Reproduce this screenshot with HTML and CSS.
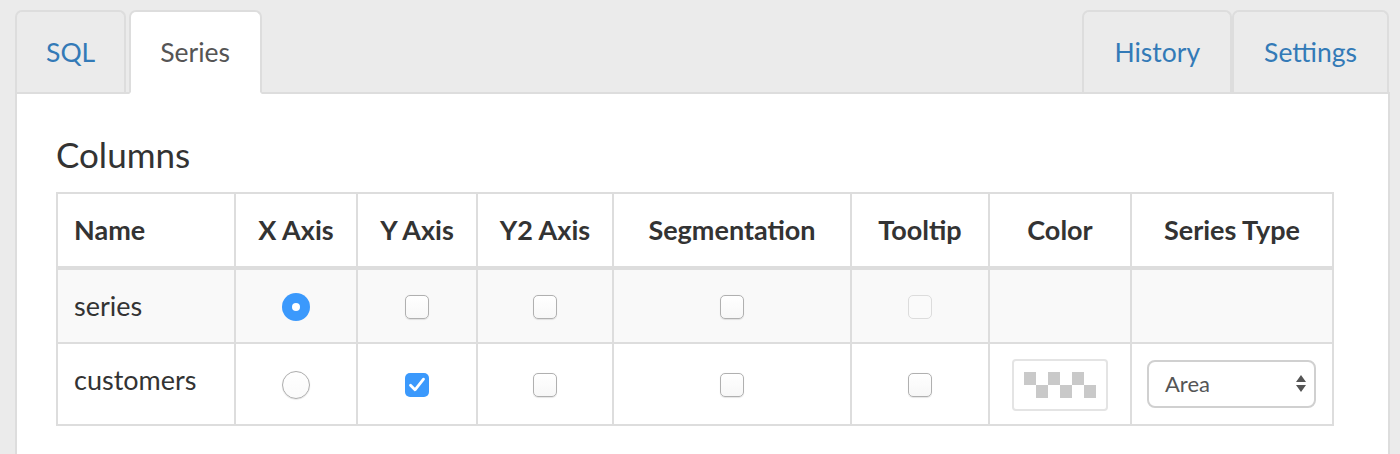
FILE: index.html
```html
<!DOCTYPE html>
<html>
<head>
<meta charset="utf-8">
<link rel="stylesheet" href="styles.css">
</head>
<body>
<div class="page">
  <ul class="tabs">
    <li class="tab"><a class="tab-link">SQL</a></li>
    <li class="tab active"><a class="tab-link">Series</a></li>
    <li class="spacer"></li>
    <li class="tab right"><a class="tab-link">History</a></li>
    <li class="tab right last"><a class="tab-link">Settings</a></li>
  </ul>
  <div class="panel">
    <h4 class="title">Columns</h4>
    <table class="cols">
      <colgroup>
        <col class="c-name"><col class="c-x"><col class="c-y"><col class="c-y2"><col class="c-seg"><col class="c-tip"><col class="c-color"><col class="c-type">
      </colgroup>
      <thead>
        <tr>
          <th class="left">Name</th>
          <th>X Axis</th>
          <th>Y Axis</th>
          <th>Y2 Axis</th>
          <th>Segmentation</th>
          <th>Tooltip</th>
          <th>Color</th>
          <th>Series Type</th>
        </tr>
      </thead>
      <tbody>
        <tr class="odd">
          <td>series</td>
          <td class="ctr"><span class="radio checked"></span></td>
          <td class="ctr"><span class="check"></span></td>
          <td class="ctr"><span class="check"></span></td>
          <td class="ctr"><span class="check"></span></td>
          <td class="ctr"><span class="check disabled"></span></td>
          <td></td>
          <td></td>
        </tr>
        <tr>
          <td>customers</td>
          <td class="ctr"><span class="radio"></span></td>
          <td class="ctr"><span class="check on"><svg viewBox="0 0 24 24" width="24" height="24"><path d="M5.5 12.2 L10 16.8 L18.5 6.2" fill="none" stroke="#fff" stroke-width="2.8" stroke-linecap="round" stroke-linejoin="round"/></svg></span></td>
          <td class="ctr"><span class="check"></span></td>
          <td class="ctr"><span class="check"></span></td>
          <td class="ctr"><span class="check"></span></td>
          <td class="ctr tight"><span class="swatch"><span class="checker"></span></span></td>
          <td class="sel-cell">
            <div class="select"><span class="sel-text">Area</span>
              <svg class="sel-arrows" viewBox="0 0 10 18" width="10" height="18"><path d="M5 0 L10 7 L0 7 Z M0 10 L10 10 L5 17 Z" fill="#555"/></svg>
            </div>
          </td>
        </tr>
      </tbody>
    </table>
  </div>
</div>
</body>
</html>
```
FILE: styles.css
```css
html, body {
  margin: 0;
  padding: 0;
  background: #ebebeb;
  font-family: Lato, "Liberation Sans", sans-serif;
  color: #333;
  overflow: hidden;
}
.page {
  margin-left: 15px;
  width: 1375px;
  padding-top: 10px;
}
.tabs {
  list-style: none;
  margin: 0;
  padding: 0;
  display: flex;
  align-items: flex-end;
  border-bottom: 2px solid #ddd;
}
.tab {
  margin-bottom: -2px;
  margin-right: 3px;
  border: 2px solid #ddd;
  border-bottom-color: transparent;
  border-radius: 7px 7px 0 0;
  background: #ebebeb;
  background-clip: padding-box;
}
.tab.right { margin-right: 0; }
.tab.last { margin-right: 1px; }
.tab.active {
  background: #fff;
  border-bottom-color: #fff;
  background-clip: border-box;
}
.tab-link {
  display: block;
  padding: 0 30px;
  height: 80px;
  line-height: 80px;
  font-size: 26.5px;
  color: #337ab7;
}
.tab:first-child .tab-link { padding: 0 29px; }
.tab.active .tab-link { color: #555; padding: 0 30px 0 29px; }
.spacer { flex: 1; }
.panel {
  background: #fff;
  border: 2px solid #ddd;
  border-top: 0;
  padding: 40px 0 0 39px;
  height: 400px;
}
.title {
  margin: 0 0 18px;
  font-size: 35px;
  line-height: 40px;
  font-weight: 400;
  color: #333;
}
.cols {
  border-collapse: collapse;
  table-layout: fixed;
  width: 1278px;
  font-size: 27px;
  line-height: 40px;
}
.c-name { width: 178px; }
.c-x { width: 122px; }
.c-y { width: 120px; }
.c-y2 { width: 136px; }
.c-seg { width: 238px; }
.c-tip { width: 138px; }
.c-color { width: 142px; }
.c-type { width: 202px; }
.cols th, .cols td {
  border: 2px solid #ddd;
  padding: 16px;
  vertical-align: top;
  text-align: left;
  white-space: nowrap;
}
.cols th {
  font-weight: 700;
  text-align: center;
  border-bottom-width: 4px;
}
.cols th.left { text-align: left; }
.cols tr.odd td { background: #f9f9f9; }
.cols td.ctr {
  text-align: center;
  vertical-align: middle;
  line-height: 0;
}
.cols td.tight {
  padding-top: 0;
  padding-bottom: 0;
}
.radio {
  display: inline-block;
  width: 28px;
  height: 28px;
  box-sizing: border-box;
  border-radius: 50%;
  border: 1.5px solid #adadad;
  background: linear-gradient(#fff, #fafafa);
  box-shadow: 0 0.5px 1px rgba(0,0,0,0.15);
  position: relative;
  top: 1px;
}
.radio.checked {
  border: 0;
  background: #3b99fc;
  box-shadow: none;
}
.radio.checked::after {
  content: "";
  position: absolute;
  left: 10px;
  top: 10px;
  width: 8px;
  height: 8px;
  border-radius: 50%;
  background: #fff;
}
.check {
  display: inline-block;
  width: 24px;
  height: 24px;
  box-sizing: border-box;
  border-radius: 5px;
  border: 1.5px solid #b0b0b0;
  background: linear-gradient(#fff, #f7f7f7);
  box-shadow: 0 0.5px 1px rgba(0,0,0,0.10);
  position: relative;
  top: 1px;
}
.check.disabled {
  border-color: #dcdcdc;
  background: #fafafa;
  box-shadow: none;
}
.check.on {
  border: 0;
  background: #3b99fc;
  box-shadow: none;
}
.check svg { display: block; }
.swatch {
  display: inline-block;
  width: 96px;
  height: 52px;
  box-sizing: border-box;
  border: 2px solid #e4e4e4;
  border-radius: 4px;
  padding: 11px 0 0 10px;
  background: #fff;
  position: relative;
  top: 1px;
}
.checker {
  display: block;
  width: 72px;
  height: 26px;
  background: repeating-conic-gradient(#fff 0 25%, #c9c9c9 0 50%) 0 0 / 24px 26px;
}
.sel-cell { vertical-align: middle; }
.select {
  display: flex;
  align-items: center;
  justify-content: space-between;
  height: 48px;
  box-sizing: border-box;
  border: 2px solid #d0d0d0;
  border-radius: 8px;
  padding: 0 8px 0 16px;
  background: #fff;
  margin-left: -1px;
}
.sel-text {
  font-size: 22px;
  color: #555;
  line-height: 44px;
}
.sel-arrows { display: block; }
```
